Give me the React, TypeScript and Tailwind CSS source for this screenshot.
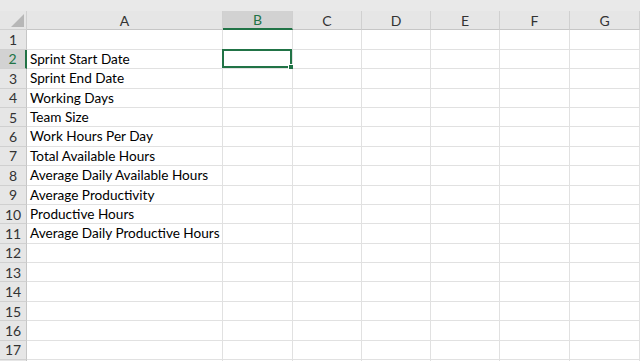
const cols = ["A", "B", "C", "D", "E", "F", "G"]
const widths = ["w-[196px]", "w-[70px]", "w-[69px]", "w-[69px]", "w-[69px]", "w-[70px]", "w-[70px]"]

const labels: Record<number, string> = {
  2: "Sprint Start Date",
  3: "Sprint End Date",
  4: "Working Days",
  5: "Team Size",
  6: "Work Hours Per Day",
  7: "Total Available Hours",
  8: "Average Daily Available Hours",
  9: "Average Productivity",
  10: "Productive Hours",
  11: "Average Daily Productive Hours",
}

const rows = Array.from({ length: 18 }, (_, i) => i + 1)

function Corner() {
  return (
    <div className="relative h-full w-[27px] shrink-0 border-r border-b border-[#d0d0d0] bg-[#e6e6e6]">
      <svg className="absolute right-[2px] bottom-[2px]" width="13" height="13" viewBox="0 0 13 13">
        <polygon points="13,0 13,13 0,13" fill="#b7b7b7" />
      </svg>
    </div>
  )
}

export default function App() {
  return (
    <div
      className="h-[361px] w-[640px] overflow-hidden bg-white text-[#222]"
      style={{ fontFamily: "Lato, 'Open Sans', sans-serif" }}
    >
      <div className="h-[11px] bg-[#e9e9e9]" />

      {/* column headers */}
      <div className="flex h-[19.4px]">
        <Corner />
        {cols.map((c, i) => {
          const sel = c === "B"
          return (
            <div
              key={c}
              className={`${widths[i]} flex shrink-0 items-center justify-center border-r border-[#d0d0d0] text-[14px] ${
                sel
                  ? "border-b-2 border-b-[#217346] bg-[#d2d2d2] text-[#217346]"
                  : "border-b border-b-[#c6c6c6] bg-[#e6e6e6] text-[#333]"
              }`}
            >
              {c}
            </div>
          )
        })}
      </div>

      {/* rows */}
      {rows.map((r) => {
        const sel = r === 2
        return (
          <div key={r} className="flex h-[19.4px]">
            <div
              className={`flex w-[27px] shrink-0 items-center justify-center border-b border-[#d0d0d0] text-[14px] ${
                sel
                  ? "border-r-2 border-r-[#217346] bg-[#d2d2d2] text-[#217346]"
                  : "border-r border-r-[#c6c6c6] bg-[#e6e6e6] text-[#333]"
              }`}
            >
              {r < 18 ? r : ""}
            </div>
            {cols.map((c, i) => (
              <div
                key={c}
                className={`${widths[i]} relative flex shrink-0 items-center border-r border-b border-[#e1e1e1]`}
              >
                {c === "A" && labels[r] && (
                  <span className="absolute left-[3px] whitespace-nowrap text-[13.6px] text-black">{labels[r]}</span>
                )}
                {c === "B" && sel && (
                  <div className="absolute -top-[1px] -left-[1px] right-0 bottom-0 border-2 border-[#217346]">
                    <div className="absolute -right-[4px] -bottom-[4px] h-[6px] w-[6px] border border-white bg-[#217346]" />
                  </div>
                )}
              </div>
            ))}
          </div>
        )
      })}
    </div>
  )
}
